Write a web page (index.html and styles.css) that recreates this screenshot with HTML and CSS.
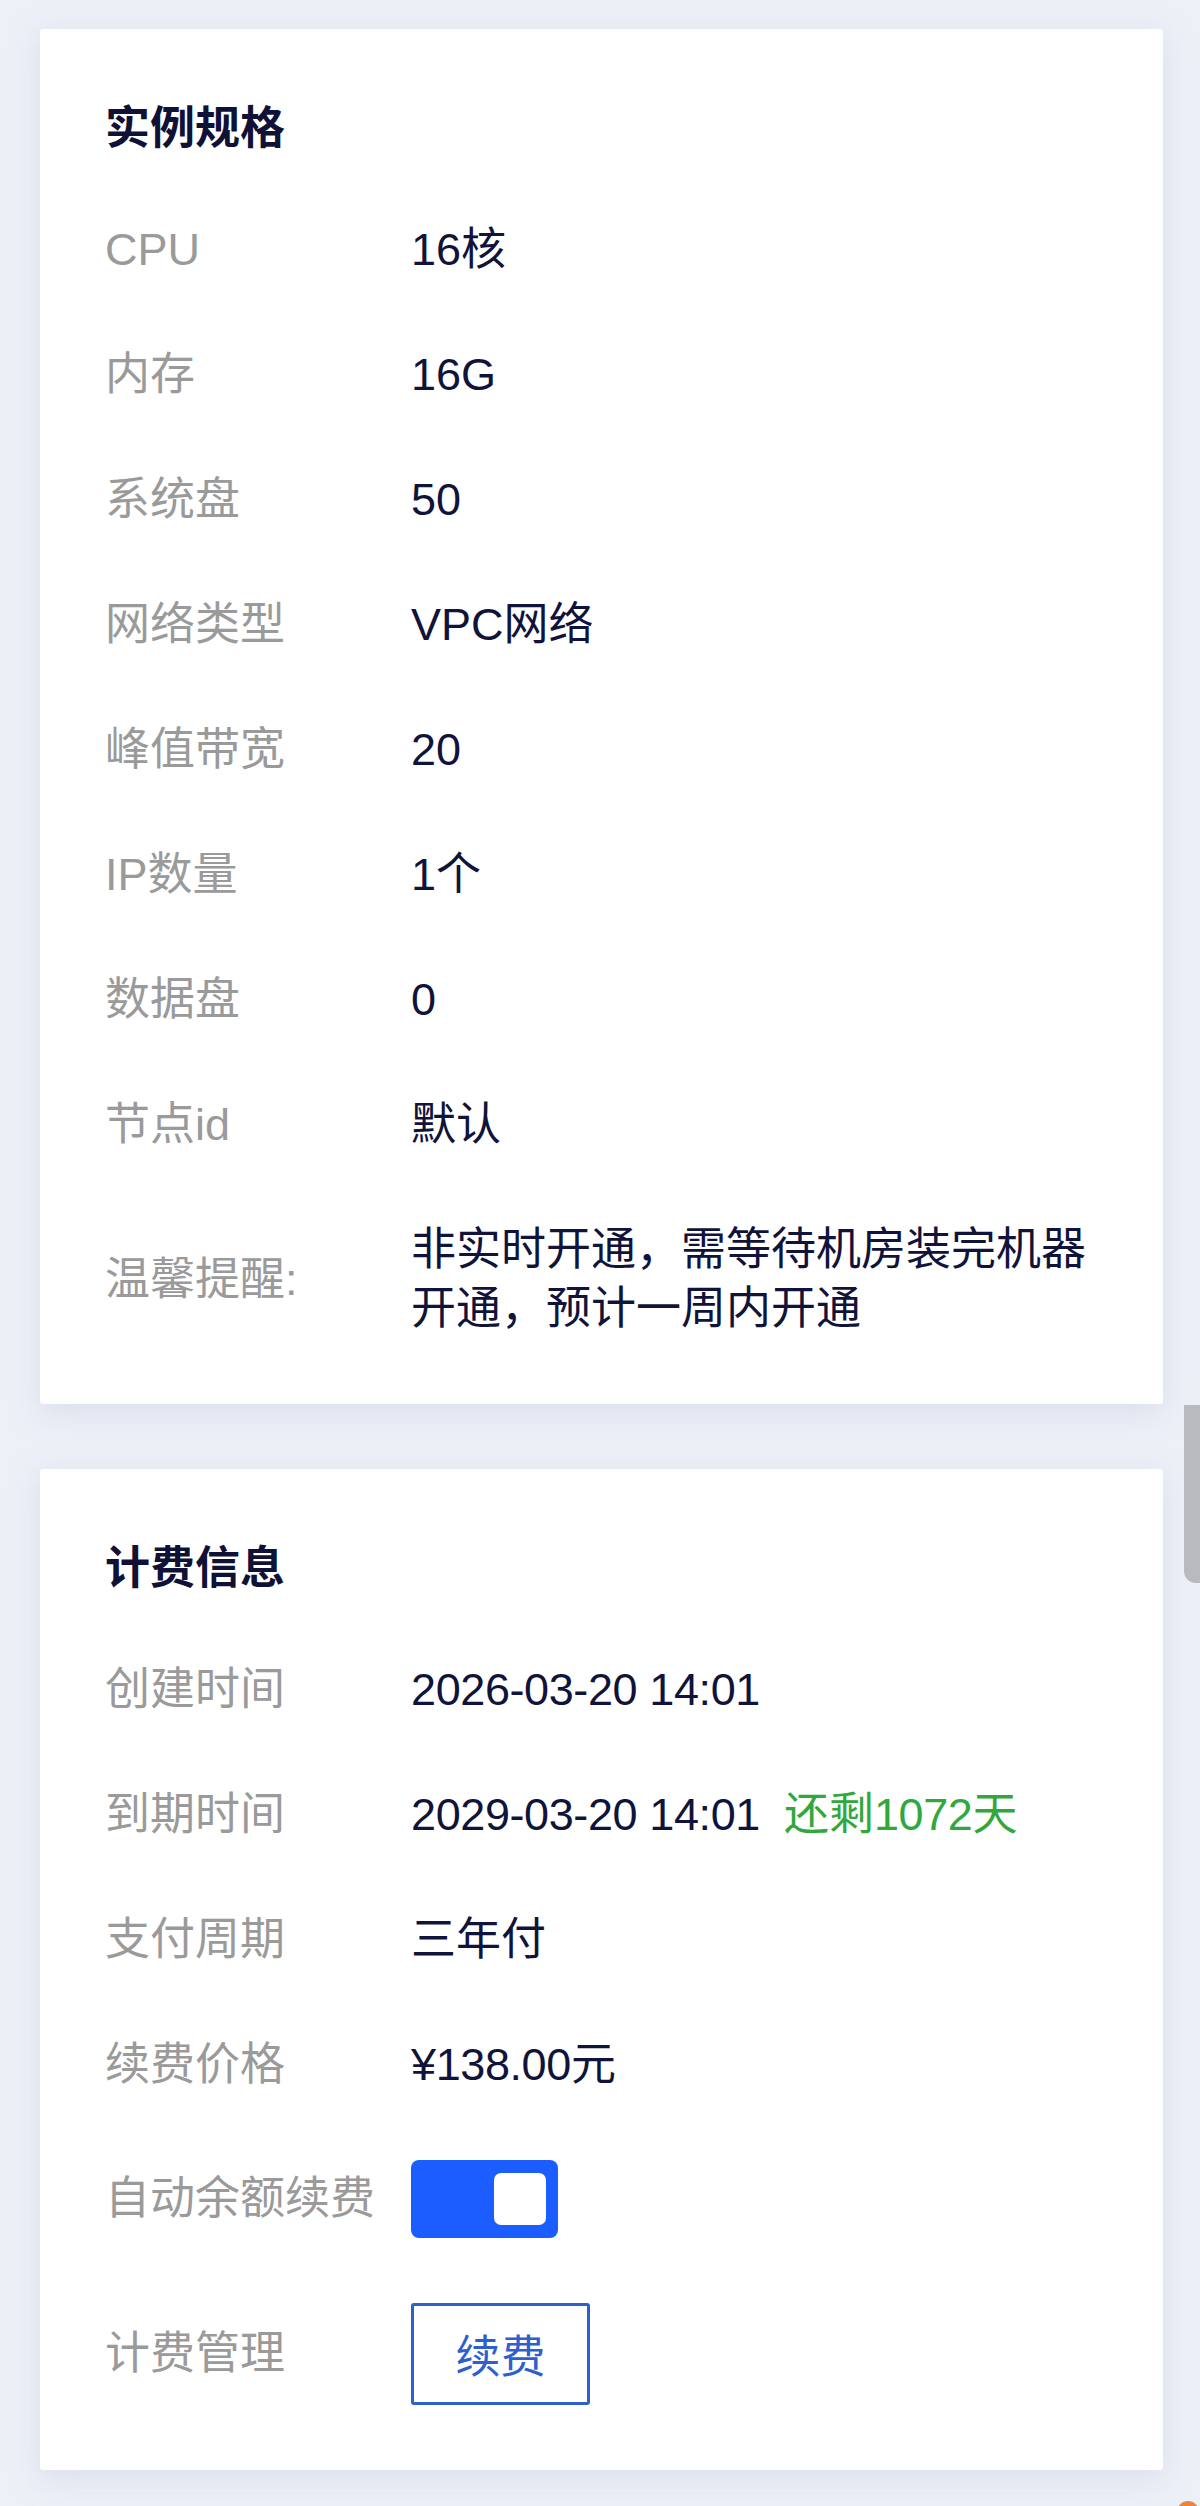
FILE: index.html
```html
<!DOCTYPE html>
<html lang="zh-CN">
<head>
<meta charset="utf-8">
<title>实例详情</title>
<link rel="stylesheet" href="styles.css">
</head>
<body>
<div class="page">
  <section class="card">
    <h2 class="card-title">实例规格</h2>
    <div class="row"><span class="label">CPU</span><span class="value">16核</span></div>
    <div class="row"><span class="label">内存</span><span class="value">16G</span></div>
    <div class="row"><span class="label">系统盘</span><span class="value">50</span></div>
    <div class="row"><span class="label">网络类型</span><span class="value">VPC网络</span></div>
    <div class="row"><span class="label">峰值带宽</span><span class="value">20</span></div>
    <div class="row"><span class="label">IP数量</span><span class="value">1个</span></div>
    <div class="row"><span class="label">数据盘</span><span class="value">0</span></div>
    <div class="row"><span class="label">节点id</span><span class="value">默认</span></div>
    <div class="row"><span class="label">温馨提醒:</span><span class="value">非实时开通，需等待机房装完机器开通，预计一周内开通</span></div>
  </section>

  <section class="card">
    <h2 class="card-title">计费信息</h2>
    <div class="row"><span class="label">创建时间</span><span class="value"><span class="num">2026-03-20 14:01</span></span></div>
    <div class="row"><span class="label">到期时间</span><span class="value"><span class="num">2029-03-20 14:01</span><span class="remain">还剩<span class="num">1072</span>天</span></span></div>
    <div class="row"><span class="label">支付周期</span><span class="value">三年付</span></div>
    <div class="row"><span class="label">续费价格</span><span class="value"><span class="num">¥138.00</span>元</span></div>
    <div class="row row-ctrl"><span class="label">自动余额续费</span><span class="toggle"><span class="thumb"></span></span></div>
    <div class="row row-ctrl"><span class="label">计费管理</span><button class="btn">续费</button></div>
  </section>
</div>
<div class="scroll-thumb"></div>
<div class="float-dot"></div>
</body>
</html>
```

FILE: styles.css
```css
html, body {
  margin: 0;
  padding: 0;
}
body {
  background: #edf0f7;
  font-family: "Liberation Sans", "Noto Sans CJK SC", sans-serif;
  font-size: 45px;
  color: #10133a;
  width: 1200px;
  height: 2506px;
  overflow: hidden;
  position: relative;
}
.page {
  padding: 29px 37px 0 40px;
  display: flex;
  flex-direction: column;
  gap: 65px;
}
.card {
  background: #ffffff;
  border-radius: 3px;
  padding: 33px 65px;
  box-shadow: 0 8px 30px rgba(180, 190, 215, 0.35);
}
.card-title {
  margin: 0;
  font-family: "Noto Sans CJK SC", sans-serif;
  font-size: 45px;
  font-weight: 700;
  line-height: 59px;
  padding: 33px 0;
  color: #0f1236;
}
.row {
  display: flex;
  align-items: center;
  padding: 33px 0;
  line-height: 59px;
}
.row-ctrl {
  padding: 32.5px 0;
}
.label {
  width: 306px;
  flex: none;
  color: #9a9a9a;
}
.value {
  flex: 1;
  color: #10133a;
}
.num {
  letter-spacing: -0.4px;
}
.remain {
  color: #31a83b;
  margin-left: 24px;
}
.toggle {
  width: 147px;
  height: 78px;
  border-radius: 8px;
  background: #1c5dff;
  display: flex;
  align-items: center;
  justify-content: flex-end;
  padding-right: 12px;
  box-sizing: border-box;
}
.thumb {
  width: 52px;
  height: 52px;
  border-radius: 7px;
  background: #ffffff;
}
.btn {
  width: 179px;
  height: 102px;
  box-sizing: border-box;
  border: 3px solid #2d5fcf;
  border-radius: 3px;
  background: #ffffff;
  color: #2d5fcf;
  font-family: "Noto Sans CJK SC", sans-serif;
  font-size: 45px;
  padding: 0;
}
.scroll-thumb {
  position: absolute;
  left: 1184px;
  top: 1405px;
  width: 16px;
  height: 178px;
  background: #b9babe;
  border-radius: 0 0 0 12px;
}
.float-dot {
  position: absolute;
  left: 1177px;
  top: 2501px;
  width: 22px;
  height: 22px;
  border-radius: 50%;
  background: #e8843f;
}
```
